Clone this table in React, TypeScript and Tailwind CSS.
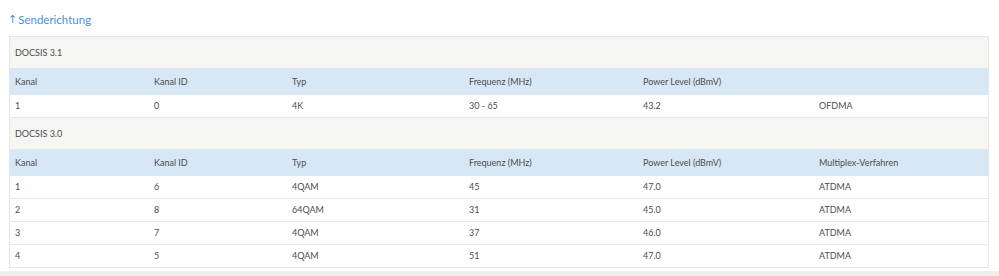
const cols = 'grid grid-cols-[139px_138px_177px_174px_176px_1fr]';

const headers = ['Kanal', 'Kanal ID', 'Typ', 'Frequenz (MHz)', 'Power Level (dBmV)'];

const docsis31 = [['1', '0', '4K', '30 - 65', '43.2', 'OFDMA']];

const docsis30 = [
  ['1', '6', '4QAM', '45', '47.0', 'ATDMA'],
  ['2', '8', '64QAM', '31', '45.0', 'ATDMA'],
  ['3', '7', '4QAM', '37', '46.0', 'ATDMA'],
  ['4', '5', '4QAM', '51', '47.0', 'ATDMA'],
];

function Section({ title, head, rows }: { title: string; head: string[]; rows: string[][] }) {
  return (
    <>
      <div className="h-[32px] flex items-center px-[5px] bg-[#f5f5f3] border-b border-[#e6e6e6]">{title}</div>
      <div className={`${cols} h-[26px] items-center bg-[#d7e7f5]`}>
        {head.map((h, i) => (
          <div key={i} className="px-[5px]">
            {h}
          </div>
        ))}
      </div>
      {rows.map((r, ri) => (
        <div key={ri} className={`${cols} h-[23px] items-center bg-white border-b border-[#e8e8e8]`}>
          {r.map((c, ci) => (
            <div key={ci} className="px-[5px]">
              {c}
            </div>
          ))}
        </div>
      ))}
    </>
  );
}

export default function App() {
  return (
    <div className="w-[999px] h-[276px] bg-white relative overflow-hidden font-['Lato',sans-serif] text-[9px] text-[#4d4d4d]">
      <div className="pl-[8px] pt-[12px] h-[36px] flex items-start gap-[1px] text-[11.5px] leading-[16px] text-[#4a90d9]">
        <span className="font-['DejaVu_Sans',sans-serif] text-[11px]">↑</span>
        <span>Senderichtung</span>
      </div>
      <div className="ml-[9px] w-[980px] border border-[#e6e6e6] border-b-0">
        <Section title="DOCSIS 3.1" head={[...headers, '']} rows={docsis31} />
        <Section title="DOCSIS 3.0" head={[...headers, 'Multiplex-Verfahren']} rows={docsis30} />
      </div>
      <div className="mt-[3px] h-[6px] bg-[#eeeeee]" />
    </div>
  );
}
